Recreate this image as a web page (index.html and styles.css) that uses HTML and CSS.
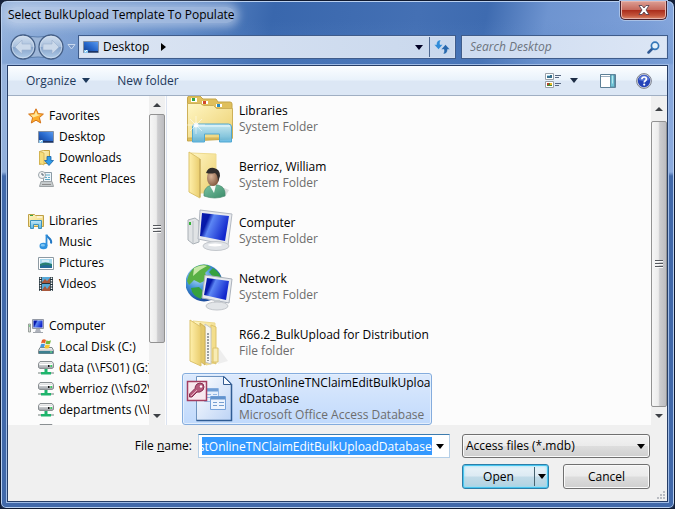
FILE: index.html
```html
<!DOCTYPE html>
<html lang="en">
<head>
<meta charset="utf-8">
<title>Select BulkUpload Template To Populate</title>
<link rel="stylesheet" href="styles.css">
</head>
<body>
<svg class="defs" aria-hidden="true">
  <defs>
    <linearGradient id="folder" x1="0" y1="0" x2="1" y2="1"><stop offset="0" stop-color="#fff6c4"/><stop offset="1" stop-color="#ecd070"/></linearGradient>
    <linearGradient id="flap" x1="0" y1="0" x2="1" y2="0"><stop offset="0" stop-color="#fff0ac"/><stop offset="1" stop-color="#e9cc6c"/></linearGradient>
    <linearGradient id="screen" x1="0" y1="0" x2="1" y2="0.4"><stop offset="0" stop-color="#0a1cb0"/><stop offset="0.3" stop-color="#0618a8"/><stop offset="0.45" stop-color="#5c86f4"/><stop offset="1" stop-color="#1226cc"/></linearGradient>
    <linearGradient id="desk" x1="0" y1="1" x2="1" y2="0"><stop offset="0" stop-color="#123c8c"/><stop offset="0.5" stop-color="#2868cc"/><stop offset="1" stop-color="#5b9cf0"/></linearGradient>
    <linearGradient id="glass" x1="0" y1="0" x2="0" y2="1"><stop offset="0" stop-color="#c4eafa"/><stop offset="1" stop-color="#5cb4e0"/></linearGradient>
    <linearGradient id="metal" x1="0" y1="0" x2="0" y2="1"><stop offset="0" stop-color="#fafafa"/><stop offset="1" stop-color="#9a9fa4"/></linearGradient>
    <linearGradient id="shirt" x1="0" y1="0" x2="1" y2="1"><stop offset="0" stop-color="#7cc4a4"/><stop offset="1" stop-color="#3c8c6a"/></linearGradient>
    <radialGradient id="skin" cx="0.35" cy="0.4" r="0.7"><stop offset="0" stop-color="#d8b498"/><stop offset="1" stop-color="#7c5238"/></radialGradient>
    <radialGradient id="globe" cx="0.35" cy="0.3" r="0.75"><stop offset="0" stop-color="#c8ecff"/><stop offset="0.5" stop-color="#3f8fd8"/><stop offset="1" stop-color="#123f92"/></radialGradient>
    <linearGradient id="page" x1="0" y1="0" x2="1" y2="1"><stop offset="0" stop-color="#ffffff"/><stop offset="1" stop-color="#bcd3f5"/></linearGradient>
    <linearGradient id="orb" x1="0" y1="0" x2="0" y2="1"><stop offset="0" stop-color="#d4e1f0"/><stop offset="0.48" stop-color="#a9c0dd"/><stop offset="0.52" stop-color="#86a4cb"/><stop offset="1" stop-color="#b4cfeb"/></linearGradient>
    <symbol id="i-desktop" viewBox="0 0 16 16"><path d="M.5 2.500h15v11H.5z" fill="url(#desk)" stroke="#8490a2"/><path d="M1 12h14v1.500H1z" fill="#1b3468"/><path d="M1 11h4v3H1z" fill="#8cc8f0"/><path d="M2 13l2-2" fill="none" stroke="#fff"/></symbol>
    <symbol id="i-drive" viewBox="0 0 16 16"><path d="M2 1.500h12l1.500 2v4l-1.500 1H2L.5 7.500v-4z" fill="url(#metal)" stroke="#8a8f92"/><path d="M1.500 4.500h13" stroke="#fff"/><path d="M10 5h1.500v2H10z" fill="#111"/><path d="M12.500 5H14v2h-1.500z" fill="#38d060"/><path d="M6.500 9h3v3H13v2.500H3V12h3.500z" fill="#1eb46c"/><path d="M0 13h3M13 13h3" stroke="#a0a9a7" stroke-width="1.500"/></symbol>
  </defs>
</svg>
<main class="dialog">
  <header class="titlebar">
    <h1>Select BulkUpload Template To Populate</h1>
    <button class="close" aria-label="Close"><svg width="12" height="10" viewBox="0 0 12 10"><path d="M1 .5h3l2 2.500 2-2.500h3L8 5l3 4.500H8L6 7 4 9.500H1L4 5z" fill="#fff" stroke="#47394a" stroke-width=".8"/></svg></button>
  </header>
  <div class="navbar">
    <div class="history">
      <svg class="orbs" width="66" height="30" viewBox="0 0 66 30" aria-hidden="true"><path d="M15 3Q29 7 43 3v24Q29 23 15 27z" fill="#9db6d8" stroke="#5c7fae"/></svg>
      <button aria-label="Back"><svg width="26" height="26" viewBox="0 0 26 26"><circle cx="13" cy="13" r="12" fill="url(#orb)" stroke="#455f86" stroke-width="1.300"/><circle cx="13" cy="13" r="10.800" fill="none" stroke="#d5e1ef" stroke-opacity=".7"/><path d="M5 13l7-7v4h9v6h-9v4z" fill="#cbd9ea" stroke="#9ab0ce" stroke-width=".6"/></svg></button>
      <button aria-label="Forward"><svg width="26" height="26" viewBox="0 0 26 26"><circle cx="13" cy="13" r="12" fill="url(#orb)" stroke="#455f86" stroke-width="1.300"/><circle cx="13" cy="13" r="10.800" fill="none" stroke="#d5e1ef" stroke-opacity=".7"/><path d="M21 13l-7-7v4H5v6h9v4z" fill="#cbd9ea" stroke="#9ab0ce" stroke-width=".6"/></svg></button>
      <button aria-label="Recent pages"><svg width="9" height="6" viewBox="0 0 9 6"><path d="M1 .5h7L4.500 5z" fill="#7998c8" stroke="#c8d8ee"/></svg></button>
    </div>
    <div class="address">
      <svg width="16" height="16"><use href="#i-desktop"/></svg>
      <button class="crumb">Desktop</button>
      <button aria-label="Subfolders"><svg width="5" height="8" viewBox="0 0 5 8"><path d="M0 0l5 4-5 4z"/></svg></button>
      <button class="push" aria-label="Previous locations"><svg width="8" height="5" viewBox="0 0 8 5"><path d="M0 0h8L4 5z" fill="#000024"/></svg></button>
      <button class="refresh" aria-label="Refresh"><svg width="16" height="16" viewBox="0 0 16 16"><path d="M7 1C3.500 1 2.500 3 2.500 5.500H0L4.500 10.500 9 5.500H6C5.800 3.500 6 2.500 7 1z" fill="#2f8bd8" stroke="#e6f0fa" stroke-width=".4"/><path d="M9 15c3.500 0 4.500-2 4.500-4.500H16L11.500 5.500 7 10.500h3c.2 2 0 3-1 4.500z" fill="#2868ad" stroke="#e6f0fa" stroke-width=".4"/></svg></button>
    </div>
    <div class="search">
      <input type="search" aria-label="Search Desktop" placeholder="Search Desktop">
      <svg width="13" height="13" viewBox="0 0 13 13"><path d="M1.500 11.500L6 7" stroke="#315a94" stroke-width="2.500" stroke-linecap="round"/><circle cx="8" cy="4.800" r="3.600" fill="#e6f2fb" stroke="#3577b8" stroke-width="1.700"/></svg>
    </div>
  </div>

  <div class="panel">
    <div class="toolbar">
      <button>Organize <svg width="8" height="5" viewBox="0 0 8 5"><path d="M0 0h8L4 5z" fill="#1e395b"/></svg></button>
      <button>New folder</button>
      <div class="tools">
        <button aria-label="Change your view"><svg width="17" height="16" viewBox="0 0 17 16"><path d="M.5.500h8v6h-8zM.5 8.500h8v6h-8z" fill="#fff" stroke="#98a0a8"/><path d="M2 2h5v3H2z" fill="#356f8d"/><path d="M2 2h3v1H2z" fill="#a7d7ef"/><path d="M2 10h5v3H2z" fill="#4b8734"/><path d="M2 10h2v2H2z" fill="#b83d28"/><path d="M5 10h2v2H5z" fill="#e9bd28"/><path d="M10 2.500h6M10 4.500h4M10 10.500h6M10 12.500h4" stroke="#566781"/></svg></button>
        <button aria-label="More views"><svg width="8" height="5" viewBox="0 0 8 5"><path d="M0 0h8L4 5z" fill="#1e2d45"/></svg></button>
        <button class="preview" aria-label="Show the preview pane"><svg width="16" height="14" viewBox="0 0 16 14"><path d="M.5.500h15v13H.5z" fill="#fff" stroke="#5c7f96"/><path d="M1 2.500h9" stroke="#9aaec0"/><path d="M10.500 1h4v12h-4z" fill="#6fc3d6" stroke="#5b90a6"/><path d="M12.500 1.500v8" stroke="#b6e6ee"/></svg></button>
        <button class="help" aria-label="Get help"><svg width="16" height="16" viewBox="0 0 16 16"><circle cx="8" cy="8" r="7.400" fill="#d5d9e2" stroke="#7d828e"/><circle cx="8" cy="8" r="6.200" fill="#2443b8"/><path d="M2.700 7a5.300 4.800 0 0 1 10.600 0Q8 9 2.700 7z" fill="#5574d4"/><path d="M5.800 6.300Q6 4 8.200 4t2.200 2.100C10.400 7.800 8.200 7.700 8.200 9.600" fill="none" stroke="#fff" stroke-width="1.700"/><circle cx="8.200" cy="11.600" r="1.100" fill="#fff"/></svg></button>
      </div>
    </div>

    <div class="browser">
      <nav class="tree">
        <ul>
          <li class="root"><a href="#"><svg width="16" height="16" viewBox="0 0 16 16"><path d="M8 .8l2.200 4.800 5.200.5-4 3.500 1.300 5.400L8 12.200 3.300 15l1.300-5.400-4-3.500 5.200-.5z" fill="#fcae2c" stroke="#d5741a"/><path d="M8 2.800l1.500 3.600 3.500.4-7.800 2.700-2.600-2.700 3.800-.4z" fill="#ffe79a"/></svg>Favorites</a></li>
          <li><a href="#"><svg width="16" height="16"><use href="#i-desktop"/></svg>Desktop</a></li>
          <li><a href="#"><svg width="16" height="16" viewBox="0 0 16 16"><path d="M1.500 1.500l4-1h6v13h-7l-3 1z" fill="url(#folder)" stroke="#c9a743"/><path d="M1.500 1.500L6 3v12l-4.500-1.500z" fill="#f6dd7c" stroke="#cfae4a" stroke-width=".7"/><path d="M9 6.500h4v4h2.500l-4.500 5-4.500-5H9z" fill="#2f9be8" stroke="#1763a8" stroke-width=".8"/></svg>Downloads</a></li>
          <li><a href="#"><svg width="16" height="16" viewBox="0 0 16 16"><path d="M5.500 1.500h8v9h-8z" fill="#eef6fb" stroke="#8b9aa5"/><path d="M7 4h5M7 6.500h2M10 6.500h2M7 8.500h5" stroke="#5eaac9"/><path d="M3 10.500h11l1.500 5H1.500z" fill="#c5cacc" stroke="#9da3a6"/><path d="M4 13.500h9" stroke="#8c8c8c"/><circle cx="4" cy="4" r="3.500" fill="#f5f6f7" stroke="#9ba4aa"/><path d="M4 2v2h2" fill="none" stroke="#536473"/></svg>Recent Places</a></li>
        </ul>
        <ul>
          <li class="root"><a href="#"><svg width="16" height="16" viewBox="0 0 16 16"><path d="M.5 3V1.500h6l1 1h8v11H.5z" fill="url(#folder)" stroke="#bfa047"/><path d="M2 2.500h3" stroke="#3ba344"/><path d="M9 4h5" stroke="#fff"/><path d="M2.500 15.500v-8h11v8h-3v-4h-5v4z" fill="url(#glass)" stroke="#3d92bd"/></svg>Libraries</a></li>
          <li><a href="#"><svg width="16" height="16" viewBox="0 0 16 16"><path d="M8.500 1c1 3 6 3.500 4.500 8.500" fill="none" stroke="#2378c4" stroke-width="2"/><path d="M8.500 .5v11.500" stroke="#2f8edb" stroke-width="1.800"/><ellipse cx="5.500" cy="12" rx="4" ry="3.300" fill="#2f92df"/><ellipse cx="4.800" cy="11.200" rx="2.200" ry="1.300" fill="#7fc7f5"/></svg>Music</a></li>
          <li><a href="#"><svg width="16" height="16" viewBox="0 0 16 16"><path d="M.5 2.500h15v12H.5z" fill="#fff" stroke="#8d9aa3"/><path d="M2 4h12v9H2z" fill="#a8d9ef"/><path d="M2 9q5-3 12 0v4H2z" fill="#267f72"/><path d="M2 11q6-2 12 0v2H2z" fill="#226a97"/><path d="M4 6h7" stroke="#fff"/></svg>Pictures</a></li>
          <li><a href="#"><svg width="16" height="16" viewBox="0 0 16 16"><path d="M1 1h14v14H1z" fill="#24333b"/><path d="M4 1h8v6H4zM4 8h8v7H4z" fill="#57a9d9"/><path d="M4 6l3-3 2 2 3-3v5H4zM4 14l3-4 2 3 3-4v6H4z" fill="#a9583c"/><path d="M2.500 1.500v14M13.500 1.500v14" stroke="#f0f3f4" stroke-width="1.500" stroke-dasharray="1.500 1"/></svg>Videos</a></li>
        </ul>
        <ul>
          <li class="root"><a href="#"><svg width="16" height="16" viewBox="0 0 16 16"><path d="M.5 6h2v8h-2z" fill="#d8ddd9" stroke="#858d88" stroke-width=".8"/><path d="M1 8h1" stroke="#31c44c"/><path d="M4.500 1.500h11v9h-11z" fill="#d6dae3" stroke="#9398a5"/><path d="M5.500 2.500h9v7h-9z" fill="url(#screen)"/><path d="M8 11h4l1 3H7z" fill="#aeb2bb"/><path d="M5 14.500h10" stroke="#a1a6ad"/></svg>Computer</a></li>
          <li><a href="#"><svg width="16" height="16" viewBox="0 0 16 16"><path d="M2 8.500h12l1.500 3v3H.5v-3z" fill="url(#metal)" stroke="#7c878a"/><path d="M1 12h14v2.500H1z" fill="#3d8090"/><path d="M12 13h2" stroke="#73f080"/><path d="M4 1q2-1.500 4 0L7 4.500q-2-1.300-4 0z" fill="#e76028"/><path d="M8.500 1.300q2 1.200 4.500 0l-1 3.500q-2 1-4.500 0z" fill="#77b738"/><path d="M3 5.200q2-1 4 0L6 8.500q-2-1-4 0z" fill="#4296dd"/><path d="M7.500 5.500q2 1 4.500 0L11 9q-2 1-4.500 0z" fill="#f8c52e"/></svg>Local Disk (C:)</a></li>
          <li><a href="#"><svg width="16" height="16"><use href="#i-drive"/></svg>data (\\FS01) (G:)</a></li>
          <li><a href="#"><svg width="16" height="16"><use href="#i-drive"/></svg>wberrioz (\\fs02\</a></li>
          <li><a href="#"><svg width="16" height="16"><use href="#i-drive"/></svg>departments (\\F</a></li>
          <li><a href="#" aria-label="Network drive"><svg width="16" height="16"><use href="#i-drive"/></svg></a></li>
        </ul>
      </nav>
      <div class="scrollbar tree-scroll" aria-hidden="true"><span class="up"></span><span class="thumb"></span><span class="down"></span></div>

      <ul class="files">
        <li><svg width="48" height="48" viewBox="0 0 48 48"><path d="M1.500 46V3q0-2 2-2H14l3 3h13l2 3h12q2 0 2 2v35z" fill="#dfbf5c" stroke="#c4a548"/><path d="M5 3h6v4H5zM16 6h6v3h-6zM30 9h6v3h-6z" fill="#fff"/><path d="M6 3h3v3H6z" fill="#2da54a"/><path d="M17 6h3v3h-3z" fill="#d4482c"/><path d="M31 9h3v3h-3z" fill="#268bc1"/><path d="M1.500 8.500h13l3 2h10l3 3h16V43H1.500z" fill="url(#folder)" stroke="#cdb058"/><path d="M6.500 47V32q0-3 3-3h33q3 0 3 3v15h-12v-8h-15v8z" fill="url(#glass)" stroke="#51a8d1" fill-opacity=".9"/><path d="M8 31h36" stroke="#eefbff"/><path d="M10 21v18M1 30h18M4 24l12 12M16 24L4 36" stroke="#fff" stroke-opacity=".5"/><circle cx="10" cy="30" r="2.500" fill="#fff" fill-opacity=".8"/></svg><div class="info"><a href="#">Libraries</a><span>System Folder</span></div></li>
        <li><svg width="48" height="48" viewBox="0 0 48 48"><path d="M36 36l7 3-4 7z" fill="#ddd"/><path d="M5 2l25 1v39H12z" fill="url(#folder)" stroke="#eedb90"/><path d="M3 1l11 7v39L3 41z" fill="url(#flap)" stroke="#dcc36c"/><path d="M14 8v38" stroke="#bda052"/><path d="M18 45q-1-9 8-11h6q8 2 7 11-10 4-21 0z" fill="url(#shirt)" stroke="#4a8c70" stroke-width=".7"/><path d="M24 35l6-1-2 8z" fill="#f7faf6"/><ellipse cx="27" cy="27" rx="6" ry="8" fill="url(#skin)"/><path d="M20 22q2-6 8-5 6 1 6 8l-2 6q0-7-3-9-5 1-9 0z" fill="#302d2b"/></svg><div class="info"><a href="#">Berrioz, William</a><span>System Folder</span></div></li>
        <li><svg width="48" height="48" viewBox="0 0 48 48"><path d="M2 13l7-2 4 3v21l-6 2-5-4z" fill="#e0e3e5" stroke="#a9b0b6"/><path d="M7 14v22" stroke="#b9bfc5"/><path d="M3 15h2v3H3z" fill="#34b239"/><path d="M14 3l32 4-4 31-30-6z" fill="#e8eaee" stroke="#b3b9c2"/><path d="M16 6l27 3-4 25-25-5z" fill="url(#screen)"/><path d="M26 35h7l1 6h-8z" fill="#c6cad0"/><ellipse cx="30" cy="39" rx="13" ry="4.500" fill="#e1e4e8" stroke="#c3c7cc"/><ellipse cx="29" cy="38" rx="7" ry="1.500" fill="#fff"/></svg><div class="info"><a href="#">Computer</a><span>System Folder</span></div></li>
        <li><svg width="48" height="48" viewBox="0 0 48 48"><circle cx="18" cy="20" r="18.500" fill="url(#globe)"/><path d="M9 4q10-5 16 0l-6 6 4 6-9 4-6-3-5 5-2-4Q3 8 9 4z" fill="#58b044"/><path d="M27 5q8 5 9 14l-8-4-5-6zM5 25l8-1 5 5-3 7q-9-3-10-11z" fill="#36a13f"/><path d="M8 5q8-4 13-2l-7 4-7 6z" fill="#c7e8a9"/><path d="M19 12l27 4-3 24-27-5z" fill="#e7eaee" stroke="#aab1bb"/><path d="M21 15l22 3-3 19-22-5z" fill="url(#screen)"/><path d="M28 37h6v5h-6z" fill="#c7ccd0"/><ellipse cx="31" cy="43" rx="11" ry="4" fill="#e2e5e8" stroke="#c2c6cb"/></svg><div class="info"><a href="#">Network</a><span>System Folder</span></div></li>
        <li><svg width="48" height="48" viewBox="0 0 48 48"><path d="M32 28l10 14-10 3z" fill="#eee"/><path d="M7 2l22 2v40l-9 2z" fill="url(#folder)" stroke="#eedb90"/><path d="M25 6l5 2v37l-6-3z" fill="#f3de8c" stroke="#dcc36c"/><path d="M19 5l6 4v36l-6-2z" fill="#f7f7f4" stroke="#c6c6c2"/><path d="M22 14v28" stroke="#9aa0a4" stroke-width="2" stroke-dasharray="2 1"/><path d="M14 4l5 4v38l-5-4z" fill="#e4c868" stroke="#cdb058"/><path d="M4 1l11 7v39L4 42z" fill="url(#flap)" stroke="#dcc36c"/><path d="M27 29h5v14h-5z" fill="#f8ecb4" stroke="#dcc36c"/></svg><div class="info"><a href="#">R66.2_BulkUpload for Distribution</a><span>File folder</span></div></li>
        <li class="selected"><svg width="48" height="48" viewBox="0 0 48 48"><path d="M10.500 1.500h28l7 7v37h-35z" fill="url(#page)" stroke="#6e93bf"/><path d="M45.500 9v36.500h-35" fill="none" stroke="#2f5c94" stroke-width="1.500"/><path d="M37.500 1.500l8 8h-8z" fill="#f6f9fe" stroke="#355d91"/><path d="M18.500 13.500h14v13h-14z" fill="#e5effc" stroke="#95b8e3"/><path d="M19 15h13" stroke="#709ed5" stroke-width="3"/><path d="M21 19.500h4m2 0h4m-10 3h4m2 0h4" stroke="#92b7e5"/><path d="M24.500 21.500h15v13h-15z" fill="#edf4fd" stroke="#75a2da"/><path d="M25 23h14" stroke="#6293cd" stroke-width="3"/><path d="M27 27.500h4m2 0h5m-11 3h4m2 0h5" stroke="#769fd0"/><path d="M1.500 6.500h19v19h-19z" fill="#f8e8ee" stroke="#a33e61" stroke-width="1.500"/><path d="M11 9q3-2 6 0 2 3 0 6-3 3-6 2l-5 5H3.500v-3L9 13.500Q9 11 11 9z" fill="#b55a7b" stroke="#852e50"/><circle cx="15" cy="11.500" r="1.200" fill="#fff"/><path d="M5 21l6-6" stroke="#e5adbf"/></svg><div class="info"><a href="#">TrustOnlineTNClaimEditBulkUploa<wbr>dDatabase</a><span>Microsoft Office Access Database</span></div></li>
      </ul>
      <div class="scrollbar file-scroll" aria-hidden="true"><span class="up"></span><span class="thumb"></span><span class="down"></span></div>
    </div>

    <form class="footer" onsubmit="return false">
      <label for="filename">File <u>n</u>ame:</label>
      <div class="combo"><input id="filename" value="TrustOnlineTNClaimEditBulkUploadDatabase"><button type="button" aria-label="File name history"><svg width="8" height="5" viewBox="0 0 8 5"><path d="M0 0h8L4 5z"/></svg></button></div>
      <div class="filter"><select aria-label="File type"><option>Access files (*.mdb)</option></select><svg width="8" height="5" viewBox="0 0 8 5"><path d="M0 0h8L4 5z"/></svg></div>
      <div class="actions">
        <div class="split"><button type="submit">Open</button><button type="button" aria-label="Open options"><svg width="8" height="5" viewBox="0 0 8 5"><path d="M0 0h8L4 5z"/></svg></button></div>
        <button type="button" class="cancel">Cancel</button>
      </div>
      <svg class="grip" width="10" height="10" viewBox="0 0 10 10" aria-hidden="true"><path d="M7 1h2v2H7zM4 4h2v2H4zM7 4h2v2H7zM1 7h2v2H1zM4 7h2v2H4zM7 7h2v2H7z" fill="#b9bcc2"/></svg>
    </form>
  </div>
</main>
<script>
const filename = document.getElementById('filename');
filename.scrollLeft = filename.scrollWidth;
</script>
</body>
</html>
```
FILE: styles.css
```css
* { box-sizing: border-box; }
body { margin: 0; background: #14203a; font: 12px/16px "Open Sans", "Noto Sans", sans-serif; color: #000; }
button, input, select { font: inherit; color: inherit; margin: 0; padding: 0; border: 0; background: none; outline: 0; }
button { display: flex; align-items: center; justify-content: center; }
svg { flex: none; display: block; }
a { color: inherit; text-decoration: none; }
ul { list-style: none; margin: 0; padding: 0; }
.defs { position: absolute; width: 0; height: 0; }

.dialog {
  display: flex; flex-direction: column; min-height: 100vh; padding: 0 6px 6px;
  border: 1px solid #101a30; border-radius: 7px 7px 6px 6px;
  box-shadow: inset 0 0 0 1px #b9d0f0;
  background:
    linear-gradient(180deg, transparent 171px, #4169aa 175px),
    linear-gradient(180deg, transparent 20px, #5b88c655 62px, transparent 64px),
    linear-gradient(100deg, #9db8df 0, #83a4d5 10%, #5e88c6 25%, #3967ad 36%, #4470b4 55%, #3e6bb0 64%, #6e94d0 72%, #7c9fd8 85%, #9eb9e6 100%);
}
.titlebar { display: flex; justify-content: space-between; align-items: flex-start; height: 28px; padding: 0 1px; }
h1 { margin: 6px 0 0; font-size: 12px; font-weight: 400; background: #c6d5ec99; box-shadow: 0 0 8px 4px #c6d5ec99; border-radius: 8px; }
.close { width: 47px; height: 19px; border: 1px solid #471f2b; border-top: 0; border-radius: 0 0 5px 5px; box-shadow: inset 0 0 0 1px #e6b4ac, 0 0 0 1px #a9c1e6; background: linear-gradient(#dda096, #c66a5d 48%, #ab2d1c 52%, #c2533b 80%, #dc8a6c); }

.navbar { display: grid; grid-template-columns: 69px 379fr 203fr; align-items: center; height: 36px; padding: 0 1px 0 3px; }
.history { position: relative; display: flex; align-items: center; gap: 2px; }
.history button { position: relative; }
.history button:last-child { margin-left: 1px; }
.orbs { position: absolute; left: -1px; top: -2px; }
.address, .search { display: flex; align-items: center; min-width: 0; height: 22px; border: 1px solid #d2def0; outline: 1px solid #3f5c8b; background: linear-gradient(90deg, #dce5f3, #c9d8ed); }
.address { margin-right: 7px; padding-left: 3px; }
.address .crumb { margin: 0 12px 0 4px; }
.push { margin-left: auto; padding: 6px; }
.refresh { width: 25px; height: 20px; border-left: 1px solid #4d6790; }
.search { padding: 0 6px 0 7px; background: linear-gradient(90deg, #cddbf0, #dce6f5); }
.search input { flex: 1; min-width: 0; }
.search input::placeholder { color: #6d747e; opacity: 1; font-style: italic; }

.panel { flex: 1; display: flex; flex-direction: column; border: 1px solid #263d66; outline: 1px solid #9fbbe5; background: #f0f0f0; }
.toolbar { display: flex; align-items: center; height: 30px; padding: 0 15px 0 18px; gap: 27px; color: #1e395b; border-bottom: 1px solid #a0afc3; background: linear-gradient(#fbfdff, #e9f2fb 48%, #dce7f5 52%, #dce7f5); }
.toolbar > button { gap: 6px; }
.tools { display: flex; align-items: center; margin-left: auto; }
.tools button:nth-child(2) { margin-left: 8px; }
.preview { margin-left: 22px; }
.help { margin-left: 20px; }

.browser { display: flex; flex: 1; height: 328px; min-height: 0; overflow: hidden; background: #fcfcfc; }
.tree { flex: 0 0 141px; padding: 9px 0 0 30px; overflow: hidden; height: 329px; }
.tree ul { margin-bottom: 21px; }
.tree a { display: flex; align-items: center; gap: 5px; height: 21px; white-space: nowrap; }
.tree .root { margin-left: -10px; }
.scrollbar { flex: none; display: flex; flex-direction: column; width: 16px; background: #f0f0f0; }
.tree-scroll { margin-right: 2px; box-shadow: 1px 0 0 #fcfcfc, 2px 0 0 #dce3f0; }
.scrollbar .up, .scrollbar .down { flex: none; height: 18px; display: grid; place-items: center; }
.up::before, .down::before { content: ""; border: 4px solid transparent; border-top-width: 0; border-bottom: 4px solid #3d4045; }
.down::before { border-bottom: 0; border-top: 4px solid #3d4045; }
.thumb { display: grid; place-items: center; border: 1px solid #929292; border-radius: 2px; background: linear-gradient(90deg, #f6f6f6, #ececec 45%, #cdcdcf 55%, #bcbcc0); }
.thumb::before { content: ""; width: 8px; height: 8px; background: repeating-linear-gradient(#55585d 0 1px, #fafafa 1px 2px, transparent 2px 3px); }
.tree-scroll .thumb { flex: 228; }
.tree-scroll::after { content: ""; order: 1; flex: 64; }
.tree-scroll .down { order: 2; }
.file-scroll .up { height: 25px; }
.file-scroll .thumb { flex: 1; }

.files { flex: 1; min-width: 0; padding-left: 15px; margin-top: -3px; height: 332px; }
.files li { display: flex; align-items: center; width: 250px; height: 52px; margin-bottom: 4px; padding: 0 3px; gap: 5px; border: 1px solid transparent; border-radius: 3px; }
.info { display: flex; flex-direction: column; white-space: nowrap; }
.info span { color: #6d6d6d; }
.selected .info { white-space: normal; }
.files .selected { border-color: #84acdd; box-shadow: inset 0 0 0 1px #e4effd; background: linear-gradient(#dce9fc, #c1dafc); }

.footer { display: grid; grid-template-columns: 1fr 252px 188px; column-gap: 12px; row-gap: 6px; align-content: start; height: 76px; padding: 9px 17px 0 0; position: relative; }
.footer label { text-align: right; margin: 4px -6px 0 0; }
.combo { display: flex; height: 24px; padding: 2px 1px 2px 3px; background: #fff; border: 1px solid #b5cfe7; border-top-color: #3d7bad; }
.combo input { flex: 1; min-width: 0; height: 18px; color: #fff; background: #3399ff; }
.combo button { width: 16px; }
.filter { position: relative; }
.filter select { appearance: none; width: 100%; height: 24px; padding: 0 24px 0 3px; }
.filter svg { position: absolute; right: 5px; top: 10px; pointer-events: none; }
.filter select, .cancel { border: 1px solid #707070; border-radius: 3px; box-shadow: inset 0 0 0 1px #fafafa; background: linear-gradient(#f2f2f2, #ebebeb 48%, #dddddd 52%, #cfcfcf); }
.actions { grid-column: 3; display: flex; gap: 14px; }
.split { display: flex; width: 87px; height: 25px; border: 1px solid #2c7ea8; border-radius: 3px; box-shadow: inset 0 0 0 1px #48c5ef, inset 0 0 3px 1px #8be0f8; background: linear-gradient(#eaf4f9, #dceaf3 48%, #c1dbe8 52%, #b1d2e1); }
.split button:first-child { flex: 1; }
.split button:last-child { width: 14px; margin: 2px 0; border-left: 1px solid #47626f; }
.cancel { flex: 1; height: 25px; }
.grip { position: absolute; right: 1px; bottom: 1px; }
```
